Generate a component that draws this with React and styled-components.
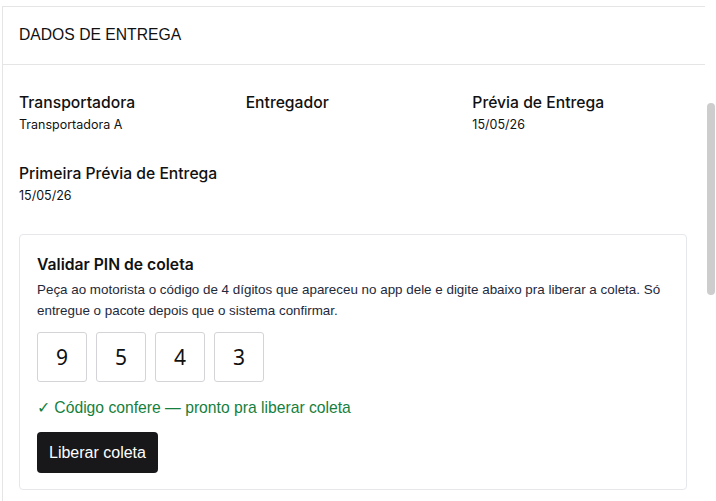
import React from "react";
import styled, { createGlobalStyle } from "styled-components";

const Global = createGlobalStyle`
  html, body { margin: 0; padding: 0; background: #fff; }
  body { font-family: "Liberation Sans", Arial, sans-serif; }
  * { box-sizing: border-box; }
`;

const Page = styled.div`
  position: relative;
  width: 716px;
  height: 501px;
  overflow: hidden;
  padding-left: 2px;
  padding-top: 6px;
`;

const Panel = styled.section`
  width: 703px;
  height: 495px;
  border-left: 1px solid #e5e5e5;
`;

const Header = styled.header`
  height: 59px;
  display: flex;
  align-items: center;
  padding-left: 16px;
  padding-bottom: 1px;
  border-top: 1px solid #e5e5e5;
  border-bottom: 1px solid #e5e5e5;
  font-family: "Liberation Sans", Arial, sans-serif;
  font-size: 15.7px;
  color: #111;
`;

const Body = styled.div`
  padding: 28px 0 0 16px;
  width: 684px;
`;

const Grid = styled.div`
  display: grid;
  grid-template-columns: repeat(3, 1fr);
  column-gap: 12px;
  row-gap: 22px;
`;

const Field = styled.div`
  display: flex;
  flex-direction: column;
  min-height: 49px;
`;

const Label = styled.div`
  font-family: Inter, "Noto Sans", sans-serif;
  font-size: 15.7px;
  font-weight: 500;
  line-height: 20px;
  color: #111;
`;

const Value = styled.div`
  font-family: Inter, "Noto Sans", sans-serif;
  font-size: 12.5px;
  line-height: 16px;
  margin-top: 4px;
  color: #111;
`;

const Card = styled.div`
  margin-top: 21px;
  border: 1px solid #e5e7eb;
  border-radius: 4px;
  padding: 19px 17px 16px 17px;
`;

const CardTitle = styled.h3`
  margin: 0;
  font-family: Inter, "Noto Sans", sans-serif;
  font-size: 15.7px;
  font-weight: 600;
  line-height: 21px;
  color: #111;
`;

const Desc = styled.p`
  margin: 4px 0 0 0;
  font-family: "Liberation Sans", Arial, sans-serif;
  font-size: 13.4px;
  line-height: 21px;
  color: #1e293b;
`;

const PinRow = styled.div`
  display: flex;
  gap: 9px;
  margin-top: 11px;
`;

const PinBox = styled.div`
  width: 50px;
  height: 50px;
  border: 1px solid #d4d4d8;
  border-radius: 3px;
  display: flex;
  align-items: center;
  justify-content: center;
  font-family: "Noto Sans", "Open Sans", sans-serif;
  font-size: 21px;
  color: #111;
`;

const Success = styled.div`
  margin-top: 16px;
  font-family: "Liberation Sans", Arial, sans-serif;
  font-size: 15.7px;
  line-height: 20px;
  color: #15803d;
`;

const Button = styled.button`
  margin-top: 14px;
  height: 41px;
  padding: 0 12px;
  border: none;
  border-radius: 4px;
  background: #18181b;
  color: #fff;
  font-family: "Liberation Sans", Arial, sans-serif;
  font-size: 16px;
  cursor: pointer;
`;

const ScrollThumb = styled.div`
  position: absolute;
  left: 707px;
  top: 103px;
  width: 8px;
  height: 192px;
  border-radius: 4px;
  background: #cdcdcd;
`;

const fields = [
  { label: "Transportadora", value: "Transportadora A" },
  { label: "Entregador", value: "" },
  { label: "Prévia de Entrega", value: "15/05/26" },
  { label: "Primeira Prévia de Entrega", value: "15/05/26" },
];

const pin = ["9", "5", "4", "3"];

export default function App() {
  return (
    <>
      <Global />
      <Page>
        <Panel>
          <Header>DADOS DE ENTREGA</Header>
          <Body>
            <Grid>
              {fields.map((f) => (
                <Field key={f.label}>
                  <Label>{f.label}</Label>
                  {f.value && <Value>{f.value}</Value>}
                </Field>
              ))}
            </Grid>
            <Card>
              <CardTitle>Validar PIN de coleta</CardTitle>
              <Desc>
                Peça ao motorista o código de 4 dígitos que apareceu no app dele e digite abaixo pra liberar a coleta. Só entregue o pacote depois que o sistema confirmar.
              </Desc>
              <PinRow>
                {pin.map((d, i) => (
                  <PinBox key={i}>{d}</PinBox>
                ))}
              </PinRow>
              <Success>✓ Código confere — pronto pra liberar coleta</Success>
              <Button>Liberar coleta</Button>
            </Card>
          </Body>
        </Panel>
        <ScrollThumb />
      </Page>
    </>
  );
}
